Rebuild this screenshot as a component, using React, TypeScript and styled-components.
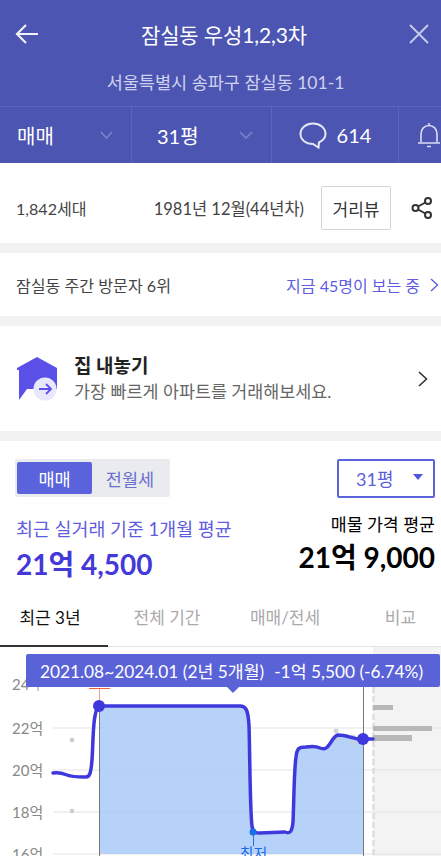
import React from "react";
import styled, { createGlobalStyle } from "styled-components";

const GlobalStyle = createGlobalStyle`
  html, body {
    margin: 0;
    padding: 0;
    background: #fff;
  }
  body {
    font-family: "Lato", "Noto Sans CJK KR", sans-serif;
    overflow: hidden;
  }
`;

const Page = styled.div`
  width: 441px;
  height: 856px;
  overflow: hidden;
  position: relative;
  background: #fff;
`;

const Header = styled.header`
  background: #4c55b1;
  color: #fff;
`;

const TitleBar = styled.div`
  height: 70px;
  padding-bottom: 2px;
  box-sizing: border-box;
  display: flex;
  align-items: center;
  justify-content: space-between;
  padding-left: 15px;
  padding-right: 12px;
`;

const Title = styled.h1`
  margin: 0;
  font-size: 21px;
  font-weight: 400;
  letter-spacing: -0.1px;
`;

const Address = styled.div`
  height: 36px;
  line-height: 26px;
  padding-left: 10px;
  text-align: center;
  font-size: 17.5px;
  color: #cfd2ee;
  border-bottom: 1px solid #5b64bb;
`;

const HeaderTabs = styled.div`
  height: 56px;
  display: grid;
  grid-template-columns: 132px 140px 127px 42px;
`;

const HeaderCell = styled.div<{ $center?: boolean; $last?: boolean }>`
  display: flex;
  align-items: center;
  justify-content: ${(p) => (p.$center ? "center" : "space-between")};
  gap: ${(p) => (p.$center ? "10px" : "0")};
  padding: ${(p) => (p.$center ? "0" : "0 18px 0 17px")};
  border-right: ${(p) => (p.$last ? "none" : "1px solid #5b64bb")};
  font-size: 20px;
  overflow: hidden;
`;

const CellLabel = styled.span<{ $indent?: number }>`
  margin-left: ${(p) => p.$indent ?? 0}px;
`;

const Row = styled.section<{ $h: number }>`
  height: ${(p) => p.$h}px;
  display: flex;
  align-items: center;
  border-bottom: 10px solid #f2f2f2;
  box-sizing: content-box;
  padding: 0 16px;
`;

const InfoRow = styled(Row)`
  padding: 10px 8px 0 16px;
`;

const InfoText = styled.span`
  font-size: 16.1px;
  color: #444;
`;

const BuiltYear = styled(InfoText)`
  font-size: 16.5px;
  margin-left: auto;
  margin-right: 17px;
`;

const RoadView = styled.button`
  width: 70px;
  height: 44px;
  padding: 0;
  background: #fff;
  border: 1px solid #d5d5d5;
  border-radius: 2px;
  font: inherit;
  font-size: 17px;
  color: #333;
`;

const ShareButton = styled.span`
  display: flex;
  margin-left: 20px;
`;

const VisitorRow = styled(Row)`
  justify-content: space-between;
  padding-right: 2px;
`;

const NowLink = styled.span`
  display: flex;
  align-items: center;
  gap: 10px;
  font-size: 16px;
  color: #5f5ce0;
`;

const SellRow = styled(Row)`
  padding-right: 13px;
`;

const SellText = styled.div`
  margin-left: 16px;
  flex: 1;
`;

const SellTitle = styled.div`
  font-size: 19px;
  font-weight: 700;
  line-height: 26px;
  color: #222;
`;

const SellSub = styled.div`
  font-size: 17.4px;
  line-height: 26px;
  color: #666;
`;

const PriceSection = styled.section`
  padding: 18px 6px 0 15px;
`;

const Controls = styled.div`
  display: flex;
  justify-content: space-between;
`;

const Toggle = styled.div`
  width: 155px;
  height: 38px;
  box-sizing: border-box;
  display: grid;
  grid-template-columns: 75px 1fr;
  padding: 3px 2px;
  background: #e9ebee;
  border-radius: 2px;
`;

const ToggleItem = styled.div<{ $active?: boolean }>`
  display: flex;
  align-items: center;
  justify-content: center;
  border-radius: 2px;
  font-size: 17.5px;
  background: ${(p) => (p.$active ? "#5a62dc" : "transparent")};
  color: ${(p) => (p.$active ? "#fff" : "#6a6fd0")};
`;

const SizeSelect = styled.div`
  width: 98px;
  height: 39px;
  box-sizing: border-box;
  display: flex;
  align-items: center;
  justify-content: space-between;
  padding: 0 10px 2px 17px;
  border: 2px solid #5a62dc;
  border-radius: 2px;
  font-size: 18px;
  color: #5a5fdc;
`;

const Caret = styled.span`
  width: 0;
  height: 0;
  border-left: 5.5px solid transparent;
  border-right: 5.5px solid transparent;
  border-top: 6px solid #4f55dc;
  margin-bottom: 1px;
`;

const Averages = styled.div`
  display: flex;
  justify-content: space-between;
  padding: 0 0 0 1px;
  height: 91px;
`;

const RealAverage = styled.div`
  padding-top: 20px;
`;

const AskAverage = styled.div`
  padding-top: 16px;
  text-align: right;
`;

const AvgLabel = styled.div<{ $dark?: boolean }>`
  font-size: ${(p) => (p.$dark ? "17.3px" : "18.4px")};
  line-height: 22px;
  color: ${(p) => (p.$dark ? "#000" : "#5f5ce0")};
`;

const AvgPrice = styled.div<{ $dark?: boolean; $top: number }>`
  font-size: 28px;
  font-weight: 700;
  line-height: 34px;
  margin-top: ${(p) => p.$top}px;
  color: ${(p) => (p.$dark ? "#000" : "#4338d8")};
`;

const PeriodTabs = styled.nav`
  height: 58px;
  display: grid;
  grid-template-columns: 108px 118px 118px 97px;
  border-bottom: 1px solid #e2e2e2;
  box-sizing: border-box;
`;

const PeriodTab = styled.div<{ $active?: boolean; $shift?: number }>`
  display: flex;
  align-items: center;
  justify-content: center;
  padding-bottom: 1px;
  padding-left: ${(p) => Math.max(p.$shift ?? 0, 0)}px;
  padding-right: ${(p) => Math.max(-(p.$shift ?? 0), 0)}px;
  font-size: 17px;
  margin-bottom: -1px;
  color: ${(p) => (p.$active ? "#111" : "#aaa")};
  border-bottom: 2px solid ${(p) => (p.$active ? "#333" : "transparent")};
`;

const ChartArea = styled.div`
  position: relative;
  height: 209px;
`;

const ChartSvg = styled.svg`
  display: block;
  font-family: "Lato", "Noto Sans CJK KR", sans-serif;
`;

const Tooltip = styled.div`
  position: absolute;
  left: 26px;
  top: 7px;
  width: 414px;
  height: 33px;
  box-sizing: border-box;
  display: flex;
  align-items: center;
  justify-content: center;
  padding-right: 3px;
  gap: 10px;
  background: #5a62d8;
  border-radius: 2px;
  color: #fff;
  font-size: 17.3px;
  white-space: nowrap;

  &::after {
    content: "";
    position: absolute;
    left: 201px;
    top: 33px;
    border-left: 6px solid transparent;
    border-right: 6px solid transparent;
    border-top: 6px solid #5a62d8;
  }
`;

const LINE =
  "M53 773 C58 772 62 773 67 775 C72 777 80 777 85 777 C90 778 91 772 92 760 C93 745 93 725 95 716 C96 711 97 707 99 706 L240 706 C246 706 248 710 249 725 C250 760 250 810 252 826 C253 833 256 833 260 833 L285 832 C290 834 292 832 293 822 C294 800 294 770 296 757 C297 748 299 747 306 747 C312 746 316 746 320 748 C325 750 327 748 329 745 C332 741 334 736 338 735 C345 735 352 738 358 739 L373 739";

const AREA =
  "M99 706 L240 706 C246 706 248 710 249 725 C250 760 250 810 252 826 C253 833 256 833 260 833 L285 832 C290 834 292 832 293 822 C294 800 294 770 296 757 C297 748 299 747 306 747 C312 746 316 746 320 748 C325 750 327 748 329 745 C332 741 334 736 338 735 C345 735 352 738 358 739 L363 739 L363 854 L99 854 Z";

function PriceChart(): React.ReactElement {
  return (
    <ChartSvg width="441" height="209" viewBox="0 647 441 209">
      <rect x="373" y="647" width="68" height="209" fill="#f3f3f3" />
      {[728, 770, 812, 854].map((y) => (
        <line key={y} x1="53" x2="441" y1={y} y2={y} stroke="#e4e4e4" strokeWidth="1.2" />
      ))}
      {[
        ["24", 690],
        ["22억", 734],
        ["20억", 776],
        ["18억", 818],
        ["16억", 860],
      ].map(([label, y]) => (
        <text key={label} x="12" y={y} fontSize="15" fill="#888">
          {label}
        </text>
      ))}
      <line x1="38" x2="38" y1="686" y2="691" stroke="#999" />
      <path d={AREA} fill="#a6c8f8" fillOpacity="0.82" />
      <line x1="373.5" x2="373.5" y1="687" y2="856" stroke="#dedede" strokeWidth="2.5" strokeDasharray="6 3" />
      <rect x="373" y="705" width="20" height="5" fill="#b8b8b8" />
      <rect x="373" y="726" width="59" height="5" fill="#b8b8b8" />
      <rect x="373" y="735" width="39" height="6" fill="#b8b8b8" />
      <circle cx="72" cy="740" r="2.3" fill="#ccc" />
      <circle cx="72" cy="811" r="2.3" fill="#ccc" />
      <circle cx="336" cy="731" r="2.5" fill="#d2d2d2" />
      <circle cx="336" cy="740" r="2.5" fill="#c4cfdf" />
      <circle cx="353" cy="737" r="2.5" fill="#d2d2d2" />
      <circle cx="353" cy="743" r="2.5" fill="#c4cfdf" />
      <line x1="99.5" x2="99.5" y1="706" y2="856" stroke="#777" />
      <line x1="363.5" x2="363.5" y1="687" y2="856" stroke="#777" />
      <line x1="99.5" x2="99.5" y1="688" y2="706" stroke="#f3a08e" />
      <line x1="89" x2="110" y1="688.5" y2="688.5" stroke="#f4623a" />
      <line x1="253.5" x2="253.5" y1="833" y2="846" stroke="#1a6fe8" />
      <text x="253.5" y="859" fontSize="15" fill="#1a6fe8" textAnchor="middle">
        최저
      </text>
      <path d={LINE} fill="none" stroke="#3f38dc" strokeWidth="3.5" strokeLinecap="round" strokeLinejoin="round" />
      <circle cx="99" cy="706" r="6" fill="#3f38dc" />
      <circle cx="363" cy="739" r="6" fill="#3f38dc" />
      <circle cx="253" cy="832" r="3.5" fill="#1a6fe8" />
    </ChartSvg>
  );
}

function App(): React.ReactElement {
  return (
    <Page>
      <GlobalStyle />
      <Header>
        <TitleBar>
          <svg width="24" height="22" viewBox="0 0 24 22" fill="none" stroke="#f1f1fa" strokeWidth="2.2">
            <path d="M23 11 H2 M11 2 L2 11 L11 20" />
          </svg>
          <Title>잠실동 우성1,2,3차</Title>
          <svg width="20" height="20" viewBox="0 0 20 20" fill="none" stroke="#c9cceb" strokeWidth="1.8">
            <path d="M1 1 L19 19 M19 1 L1 19" />
          </svg>
        </TitleBar>
        <Address>서울특별시 송파구 잠실동 101-1</Address>
        <HeaderTabs>
          <HeaderCell>
            <span>매매</span>
            <svg width="13" height="8" viewBox="0 0 13 8" fill="none" stroke="#7d84cb" strokeWidth="1.5">
              <path d="M1 1 L6.5 7 L12 1" />
            </svg>
          </HeaderCell>
          <HeaderCell>
            <CellLabel $indent={8}>31평</CellLabel>
            <svg width="14" height="8" viewBox="0 0 14 8" fill="none" stroke="#7d84cb" strokeWidth="1.5">
              <path d="M1 1 L7 7 L13 1" />
            </svg>
          </HeaderCell>
          <HeaderCell $center>
            <svg width="28" height="27" viewBox="0 0 28 27" fill="none" stroke="#e6e7f6" strokeWidth="2">
              <path d="M14 1.5 C7 1.5 1.5 6 1.5 12 C1.5 18 7 22 14 22 L19.5 25.5 L20 20.5 C24 18.5 26.5 15.5 26.5 12 C26.5 6 21 1.5 14 1.5 Z" />
            </svg>
            <span>614</span>
          </HeaderCell>
          <HeaderCell $center $last>
            <svg width="24" height="26" viewBox="0 0 24 26" fill="none" stroke="#dcdef2" strokeWidth="1.6" style={{ marginLeft: 17, flexShrink: 0 }}>
              <path d="M12 1 V3.5 M4 20 V12 C4 7 7.5 3.5 12 3.5 C16.5 3.5 20 7 20 12 V20 M1 21 H23 M10 24.5 H14" />
            </svg>
          </HeaderCell>
        </HeaderTabs>
      </Header>

      <InfoRow $h={70}>
        <InfoText>1,842세대</InfoText>
        <BuiltYear>1981년 12월(44년차)</BuiltYear>
        <RoadView>거리뷰</RoadView>
        <ShareButton>
          <svg width="22" height="22" viewBox="0 0 22 22" fill="none" stroke="#333" strokeWidth="2">
            <circle cx="4.5" cy="11" r="3" />
            <circle cx="17" cy="4" r="3" />
            <circle cx="17" cy="18" r="3" />
            <path d="M7.2 9.5 L14.3 5.5 M7.2 12.5 L14.3 16.5" />
          </svg>
        </ShareButton>
      </InfoRow>

      <VisitorRow $h={63}>
        <InfoText>잠실동 주간 방문자 6위</InfoText>
        <NowLink>
          지금 45명이 보는 중
          <svg width="9" height="14" viewBox="0 0 9 14" fill="none" stroke="#5f5ce0" strokeWidth="1.4">
            <path d="M1 1 L7.5 7 L1 13" />
          </svg>
        </NowLink>
      </VisitorRow>

      <SellRow $h={105}>
        <svg width="42" height="44" viewBox="0 0 42 44">
          <path d="M1 11 L21 0 L41 11 V32 H11 L3 43 V13 H1 Z" fill="#5a50e8" />
          <circle cx="29" cy="32" r="11.5" fill="#e9e7fb" />
          <path d="M23 32 H35 M30 27 L35 32 L30 37" fill="none" stroke="#5a50e8" strokeWidth="1.8" />
        </svg>
        <SellText>
          <SellTitle>집 내놓기</SellTitle>
          <SellSub>가장 빠르게 아파트를 거래해보세요.</SellSub>
        </SellText>
        <svg width="10" height="16" viewBox="0 0 10 16" fill="none" stroke="#333" strokeWidth="1.6">
          <path d="M1 1 L8.5 8 L1 15" />
        </svg>
      </SellRow>

      <PriceSection>
        <Controls>
          <Toggle>
            <ToggleItem $active>매매</ToggleItem>
            <ToggleItem>전월세</ToggleItem>
          </Toggle>
          <SizeSelect>
            31평
            <Caret />
          </SizeSelect>
        </Controls>
        <Averages>
          <RealAverage>
            <AvgLabel>최근 실거래 기준 1개월 평균</AvgLabel>
            <AvgPrice $top={7}>21억 4,500</AvgPrice>
          </RealAverage>
          <AskAverage>
            <AvgLabel $dark>매물 가격 평균</AvgLabel>
            <AvgPrice $dark $top={4}>21억 9,000</AvgPrice>
          </AskAverage>
        </Averages>
      </PriceSection>
      <PeriodTabs>
        <PeriodTab $active $shift={-8}>최근 3년</PeriodTab>
        <PeriodTab>전체 기간</PeriodTab>
        <PeriodTab>매매/전세</PeriodTab>
        <PeriodTab $shift={16}>비교</PeriodTab>
      </PeriodTabs>
      <ChartArea>
        <PriceChart />
        <Tooltip>
          <span>2021.08~2024.01 (2년 5개월)</span>
          <span>-1억 5,500 (-6.74%)</span>
        </Tooltip>
      </ChartArea>
    </Page>
  );
}

export default App;
